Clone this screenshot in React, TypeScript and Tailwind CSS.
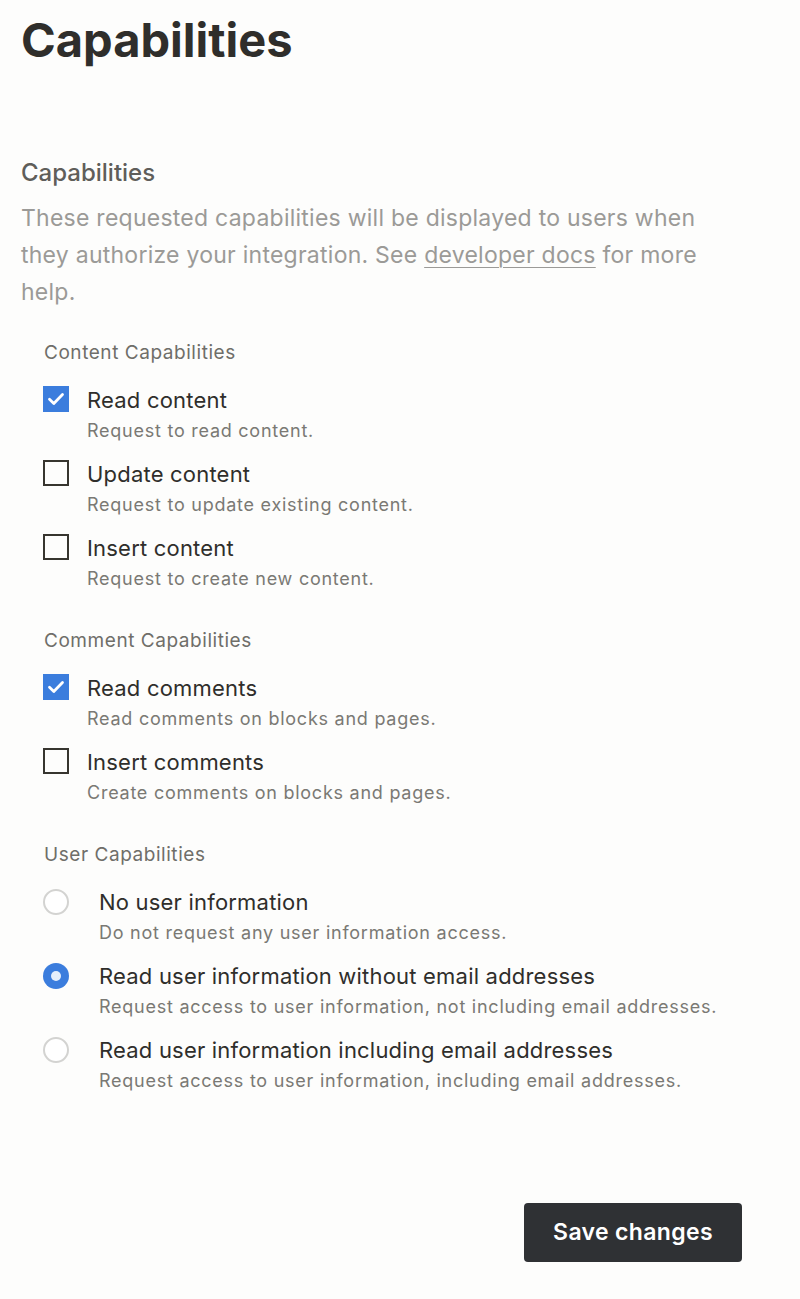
import { useState } from "react";

type Option = {
  id: string;
  label: string;
  description: string;
};

const contentOptions: Option[] = [
  { id: "read_content", label: "Read content", description: "Request to read content." },
  { id: "update_content", label: "Update content", description: "Request to update existing content." },
  { id: "insert_content", label: "Insert content", description: "Request to create new content." },
];

const commentOptions: Option[] = [
  { id: "read_comments", label: "Read comments", description: "Read comments on blocks and pages." },
  { id: "insert_comments", label: "Insert comments", description: "Create comments on blocks and pages." },
];

const userOptions: Option[] = [
  { id: "none", label: "No user information", description: "Do not request any user information access." },
  {
    id: "no_email",
    label: "Read user information without email addresses",
    description: "Request access to user information, not including email addresses.",
  },
  {
    id: "with_email",
    label: "Read user information including email addresses",
    description: "Request access to user information, including email addresses.",
  },
];

function Checkbox({ checked }: { checked: boolean }) {
  if (checked) {
    return (
      <span className="flex h-[26px] w-[26px] shrink-0 items-center justify-center bg-[#3b7ddd]">
        <svg width="22" height="22" viewBox="0 0 22 22" fill="none">
          <path d="M4.5 11.3l4.3 4.1 8.7-8.9" stroke="white" strokeWidth="2.8" strokeLinecap="round" strokeLinejoin="round" />
        </svg>
      </span>
    );
  }
  return <span className="block h-[26px] w-[26px] shrink-0 border-2 border-[#37352f]" />;
}

function Radio({ checked }: { checked: boolean }) {
  if (checked) {
    return (
      <span className="flex h-[26px] w-[26px] shrink-0 items-center justify-center rounded-full bg-[#3b7ddd]">
        <span className="h-[10px] w-[10px] rounded-full bg-[#e6effb]" />
      </span>
    );
  }
  return <span className="block h-[26px] w-[26px] shrink-0 rounded-full border-2 border-[#d3d3d1] bg-white" />;
}

function SectionLabel({ children }: { children: string }) {
  return (
    <div className="mb-[20px] pl-[1px] text-[19px] leading-[24px] tracking-[0.55px] text-[#6f6e69]">{children}</div>
  );
}

function OptionText({ option }: { option: Option }) {
  return (
    <span className="flex flex-col">
      <span className="text-[22px] leading-[30px] tracking-[0.2px] text-[#2f2e2b]">{option.label}</span>
      <span className="mt-[1px] text-[18px] leading-[30px] tracking-[0.75px] text-[#7a7974]">{option.description}</span>
    </span>
  );
}

export default function App() {
  const [checked, setChecked] = useState<Record<string, boolean>>({
    read_content: true,
    read_comments: true,
  });
  const [userCap, setUserCap] = useState("no_email");

  const toggle = (id: string) => setChecked((c) => ({ ...c, [id]: !c[id] }));

  return (
    <div className="min-h-[1299px] bg-[#fdfdfc] px-[21px] pt-[12px] font-['Inter',sans-serif] text-[#37352f]">
      <div className="w-[721px]">
        <h1 className="text-[47px] font-bold leading-[56px] text-[#2f2e2b]">Capabilities</h1>

        <h2 className="mt-[90px] text-[24px] font-medium leading-[30px] text-[#5f5e5a]">Capabilities</h2>
        <p className="mt-[12px] text-[23px] leading-[37px] tracking-[0.25px] text-[#9b9a97]">
          These requested capabilities will be displayed to users when they authorize your integration. See{" "}
          <a href="#" className="underline decoration-1 underline-offset-[4px]">
            developer docs
          </a>{" "}
          for more help.
        </p>

        <div className="mt-[30px] pl-[22px]">
          <SectionLabel>Content Capabilities</SectionLabel>
          <div className="flex flex-col gap-[13px]">
            {contentOptions.map((o) => (
              <label key={o.id} className="flex cursor-pointer items-start gap-[18px]" onClick={() => toggle(o.id)}>
                <span className="pt-[1px]">
                  <Checkbox checked={!!checked[o.id]} />
                </span>
                <OptionText option={o} />
              </label>
            ))}
          </div>

          <div className="mt-[35px]">
            <SectionLabel>Comment Capabilities</SectionLabel>
            <div className="flex flex-col gap-[13px]">
              {commentOptions.map((o) => (
                <label key={o.id} className="flex cursor-pointer items-start gap-[18px]" onClick={() => toggle(o.id)}>
                  <span className="pt-[1px]">
                    <Checkbox checked={!!checked[o.id]} />
                  </span>
                  <OptionText option={o} />
                </label>
              ))}
            </div>
          </div>

          <div className="mt-[35px]">
            <SectionLabel>User Capabilities</SectionLabel>
            <div className="flex flex-col gap-[13px]">
              {userOptions.map((o) => (
                <label key={o.id} className="flex cursor-pointer items-start gap-[30px]" onClick={() => setUserCap(o.id)}>
                  <span className="pt-[2px]">
                    <Radio checked={userCap === o.id} />
                  </span>
                  <OptionText option={o} />
                </label>
              ))}
            </div>
          </div>
        </div>

        <div className="mt-[107px] flex justify-end">
          <button className="h-[59px] w-[218px] rounded-[4px] bg-[#2f3134] text-[23px] font-semibold tracking-[0.35px] text-white">
            Save changes
          </button>
        </div>
      </div>
    </div>
  );
}
